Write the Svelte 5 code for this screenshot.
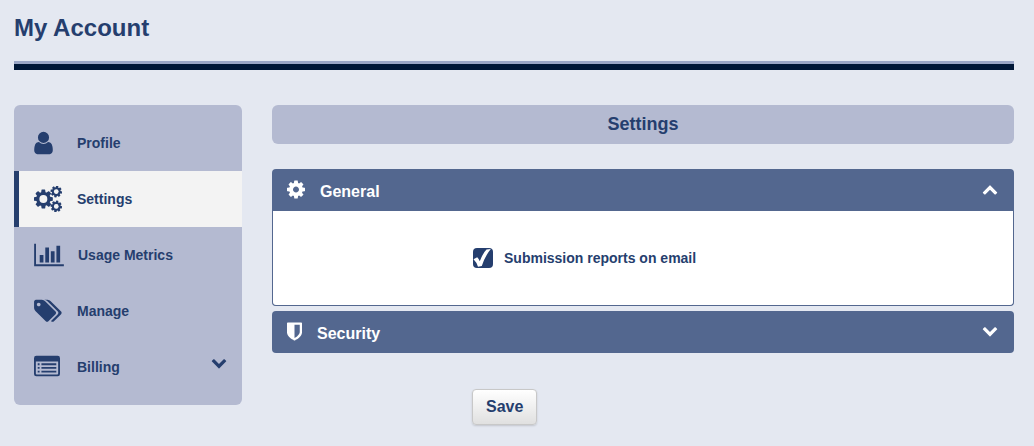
<script>
    const cog = "M1152 896q0-106-75-181t-181-75-181 75-75 181 75 181 181 75 181-75 75-181zm512-109v222q0 12-8 23t-20 13l-185 28q-19 54-39 91 35 50 107 138 10 12 10 25t-9 23q-27 37-99 108t-94 71q-12 0-26-9l-138-108q-44 23-91 38-16 136-29 186-7 28-36 28h-222q-14 0-24.5-8.5t-11.5-21.5l-28-184q-49-16-90-37l-141 107q-10 9-25 9-14 0-25-11-126-114-165-168-7-10-7-23 0-12 8-23 15-21 51-66.5t54-70.5q-27-50-41-99l-183-27q-13-2-21-12.5t-8-23.5v-222q0-12 8-23t19-13l186-28q14-46 39-92-40-57-107-138-10-12-10-24 0-10 9-23 26-36 98.5-107.5t94.5-71.5q13 0 26 10l138 107q44-23 91-38 16-136 29-186 7-28 36-28h222q14 0 24.5 8.5t11.5 21.5l28 184q49 16 90 37l142-107q9-9 24-9 13 0 25 10 129 119 165 170 7 8 7 22 0 12-8 23-15 21-51 66.5t-54 70.5q26 50 41 98l183 28q13 2 21 12.5t8 23.5z";

    const items = ["Profile", "Settings", "Usage Metrics", "Manage", "Billing"];

    let active = $state("Settings");
    let general = $state(true);
    let security = $state(false);
    let reports = $state(true);
</script>

{#snippet chevron(up)}
    <svg class="chevron" width="16" height="10" viewBox="0 515 1792 1120" aria-hidden="true">
        {#if up}
            <path transform="translate(0 75)" d="M1683 1331l-166 165q-19 19-45 19t-45-19l-531-531-531 531q-19 19-45 19t-45-19l-166-165q-19-19-19-45.5t19-45.5l742-741q19-19 45-19t45 19l742 741q19 19 19 45.5t-19 45.5z" />
        {:else}
            <path d="M1683 808l-742 741q-19 19-45 19t-45-19l-742-741q-19-19-19-45.5t19-45.5l166-165q19-19 45-19t45 19l531 531 531-531q19-19 45-19t45 19l166 165q19 19 19 45.5t-19 45.5z" />
        {/if}
    </svg>
{/snippet}

{#snippet icon(name)}
    {#if name == "Profile"}
        <svg width="19" height="26" viewBox="256 0 1280 1792">
            <path d="M1536 1399q0 109-62.5 187t-150.5 78h-854q-88 0-150.5-78t-62.5-187q0-85 8.5-160.5t31.5-152 58.5-131 94-89 134.5-34.5q131 128 313 128t313-128q76 0 134.5 34.5t94 89 58.5 131 31.5 152 8.5 160.5zm-256-887q0 159-112.5 271.5t-271.5 112.5-271.5-112.5-112.5-271.5 112.5-271.5 271.5-112.5 271.5 112.5 112.5 271.5z" />
        </svg>
    {:else if name == "Settings"}
        <svg width="28" height="26" viewBox="0 0 1920 1792">
            <path transform="translate(640 896) scale(.85) translate(-896 -896)" d={cog} />
            <circle class="hole" cx="640" cy="896" r="275" />
            <path transform="translate(1530 384) rotate(10) scale(.52) translate(-896 -896)" d={cog} />
            <circle class="hole" cx="1530" cy="384" r="160" />
            <path transform="translate(1530 1408) rotate(10) scale(.52) translate(-896 -896)" d={cog} />
            <circle class="hole" cx="1530" cy="1408" r="160" />
        </svg>
    {:else if name == "Usage Metrics"}
        <svg width="30" height="26" viewBox="0 0 2048 1792">
            <path d="M640 896v512h-256v-512h256zm384-512v1024h-256v-1024h256zm1024 1152v128h-2048v-1536h128v1408h1920zm-640-896v768h-256v-768h256zm384-384v1152h-256v-1152h256z" />
        </svg>
    {:else if name == "Manage"}
        <svg width="28" height="26" viewBox="0 0 1920 1792">
            <path d="M448 448q0-53-37.500-90.500t-90.500-37.500-90.500 37.500-37.500 90.500 37.500 90.500 90.500 37.500 90.500-37.500 37.500-90.500zm1067 576q0 53-37 90l-491 492q-39 37-91 37-53 0-90-37l-715-716q-38-37-64.500-101t-26.500-117v-416q0-52 38-90t90-38h416q53 0 117 26.500t102 64.500l715 714q37 39 37 91zm384 0q0 53-37 90l-491 492q-39 37-91 37-36 0-59-14t-53-45l470-470q37-37 37-90 0-52-37-91l-715-714q-38-38-102-64.500t-117-26.500h224q53 0 117 26.500t102 64.500l715 714q37 39 37 91z" />
        </svg>
    {:else}
        <svg width="26" height="26" viewBox="0 0 1792 1792">
            <path fill-rule="evenodd" d="M160 128h1472q160 0 160 160v1088q0 160-160 160h-1472q-160 0-160-160v-1088q0-160 160-160zm-32 384v832q0 64 64 64h1408q64 0 64-64v-832z" />
            <path d="M256 640h128v128h-128zM512 640h1024v128h-1024zM256 896h128v128h-128zM512 896h1024v128h-1024zM256 1152h128v128h-128zM512 1152h1024v128h-1024z" />
        </svg>
    {/if}
{/snippet}

<header>
    <h1>My Account</h1>
</header>

<div class="page">
    <nav>
        {#each items as item}
            <a href="#{item}" class:active={active == item} onclick={() => (active = item)}>
                <span class="icon" aria-hidden="true">{@render icon(item)}</span>
                <span>{item}</span>
                {#if item == "Billing"}
                    {@render chevron(false)}
                {/if}
            </a>
        {/each}
    </nav>

    <main>
        <h2>Settings</h2>

        <section>
            <button class="head" aria-expanded={general} onclick={() => (general = !general)}>
                <svg width="18" height="21" viewBox="128 0 1536 1792" aria-hidden="true">
                    <path d={cog} />
                </svg>
                <span>General</span>
                {@render chevron(general)}
            </button>
            {#if general}
                <div class="body">
                    <label>
                        <span class="check">
                            <input type="checkbox" bind:checked={reports} />
                            {#if reports}
                                <svg width="20" height="20" viewBox="0 0 20 20" aria-hidden="true">
                                    <path d="M0.500 11.200L4.200 9.200Q5.800 10.800 6.800 13.200Q9.800 5.200 13.500 1.500L17.800 1Q12 8 8.800 18L5 18.800Q3.500 14 0.500 11.200z" />
                                </svg>
                            {/if}
                        </span>
                        Submission reports on email
                    </label>
                </div>
            {/if}
        </section>

        <section>
            <button class="head" aria-expanded={security} onclick={() => (security = !security)}>
                <svg width="15" height="21" viewBox="256 0 1280 1792" aria-hidden="true">
                    <path d="M1344 960v-640h-448v1137q119-63 213-137 235-184 235-360zm192-768v768q0 86-33.500 170.500t-83 150-118 127.500-126.500 103-121 77.500-89.500 49.500-42.500 20q-12 6-26 6t-26-6q-16-7-42.500-20t-89.500-49.500-121-77.500-126.500-103-118-127.500-83-150-33.500-170.500v-768q0-26 19-45t45-19h1152q26 0 45 19t19 45z" />
                </svg>
                <span>Security</span>
                {@render chevron(security)}
            </button>
            {#if security}
                <div class="body"></div>
            {/if}
        </section>

        <button class="save">Save</button>
    </main>
</div>

<style>
    :global(body) {
        background-color: #e4e8f1;
        color: #253e6e;
        font-family: "Liberation Sans", Arial, sans-serif;
        font-size: 14px;
        font-weight: bold;
    }

    svg {
        fill: currentColor;
        flex: none;
    }

    header {
        margin: 0 20px 35px 14px;
        padding: 14px 0 22px;
        border-bottom: 6px solid #001737;
        box-shadow: inset 0 -3px #9aa6c6;
    }

    h1 {
        margin: 0;
        font-size: 24px;
        line-height: 28px;
    }

    .page {
        display: flex;
        align-items: flex-start;
        gap: 30px;
        padding: 0 20px 20px 14px;
    }

    nav {
        flex: none;
        box-sizing: border-box;
        width: 228px;
        padding: 10px 0;
        border-radius: 6px;
        background-color: #b4bad1;
    }

    nav a {
        display: flex;
        align-items: center;
        gap: 14px;
        box-sizing: border-box;
        height: 56px;
        padding: 0 15px;
        border-left: 5px solid transparent;
        color: inherit;
        text-decoration: none;
    }

    nav a.active {
        border-left-color: #253e6e;
        background-color: #f3f3f3;
    }

    .icon {
        display: flex;
        min-width: 29px;
    }

    .hole {
        fill: #b4bad1;
    }

    .active .hole {
        fill: #f3f3f3;
    }

    .chevron {
        margin-left: auto;
    }

    nav .chevron {
        margin-bottom: 6px;
    }

    main {
        flex: 1;
    }

    h2 {
        margin: 0 0 25px;
        border-radius: 6px;
        background-color: #b4bad1;
        font-size: 18px;
        line-height: 39px;
        text-align: center;
    }

    section {
        margin-bottom: 5px;
        border-radius: 4px;
        overflow: hidden;
        background-color: #53678f;
    }

    button {
        font-family: inherit;
        font-size: 16px;
        font-weight: bold;
        cursor: pointer;
    }

    .head {
        display: flex;
        align-items: center;
        gap: 15px;
        width: 100%;
        height: 42px;
        padding: 3px 16px 0 15px;
        border: none;
        background-color: transparent;
        color: #ffffff;
    }

    .head svg {
        margin-bottom: 4px;
    }

    .body {
        padding: 37px 200px;
        border: 1px solid #53678f;
        border-top: none;
        border-radius: 0 0 4px 4px;
        background-color: #ffffff;
    }

    label {
        display: flex;
        align-items: center;
        gap: 11px;
        white-space: nowrap;
        color: #253e6e;
    }

    .check {
        display: grid;
    }

    .check > * {
        grid-area: 1 / 1;
    }

    .check svg {
        color: #ffffff;
        pointer-events: none;
    }

    input {
        appearance: none;
        width: 20px;
        height: 20px;
        margin: 0;
        border-radius: 4px;
        background-color: #253e6e;
    }

    .save {
        margin: 31px 0 0 200px;
        padding: 0 13px;
        border: 1px solid #c8c8c8;
        border-radius: 4px;
        background: linear-gradient(#ffffff, #e0e0e0);
        box-shadow: 0 1px 2px rgba(0, 0, 0, 0.15);
        color: #253e6e;
        line-height: 34px;
    }
</style>
